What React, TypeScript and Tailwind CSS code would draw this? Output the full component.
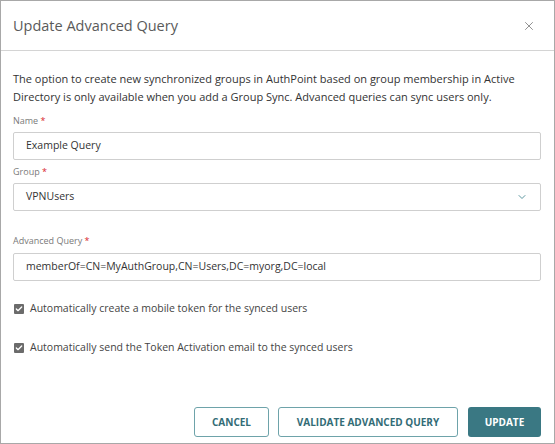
import { ChevronDown, X, Check } from 'lucide-react';

function Label({ text }: { text: string }) {
  return (
    <div className="text-[9px] leading-[12px] text-[#7a7a7a]">
      {text} <span className="text-[#d9262c]">*</span>
    </div>
  );
}

function Checkbox({ label }: { label: string }) {
  return (
    <label className="h-[16px] flex items-center gap-[6px] text-[10.5px] text-[#444]">
      <span className="w-[10px] h-[10px] rounded-[1px] bg-[#6b6b6b] flex items-center justify-center">
        <Check size={8} strokeWidth={4} className="text-white" />
      </span>
      {label}
    </label>
  );
}

export default function App() {
  return (
    <div className="w-[555px] h-[444px] bg-white border border-[#a8a8a8] flex flex-col font-['Open_Sans',sans-serif]">
      <div className="h-[50px] shrink-0 flex items-center justify-between pl-[12px] pr-[18px] border-b border-[#d4d4d4]">
        <h1 className="text-[14.5px] text-[#5a5a5a]">Update Advanced Query</h1>
        <X size={14} strokeWidth={1.3} className="text-[#6f6f6f]" />
      </div>

      <div className="flex-1 flex flex-col pl-[12px] pr-[13px]">
        <p className="mt-[19px] text-[11px] leading-[18px] text-[#333]">
          The option to create new synchronized groups in AuthPoint based on group membership in Active Directory is
          only available when you add a Group Sync. Advanced queries can sync users only.
        </p>

        <div className="mt-[9px]">
          <Label text="Name" />
          <div className="mt-[5px] h-[28px] border border-[#cfcfcf] rounded-[2px] flex items-center px-[12px] text-[10.5px] text-[#333]">
            Example Query
          </div>
        </div>

        <div className="mt-[6px]">
          <Label text="Group" />
          <div className="mt-[5px] h-[28px] border border-[#cfcfcf] rounded-[2px] flex items-center justify-between pl-[12px] pr-[12px] text-[10.5px] text-[#333]">
            VPNUsers
            <ChevronDown size={12} strokeWidth={2} className="text-[#5d97a0]" />
          </div>
        </div>

        <div className="mt-[24px]">
          <Label text="Advanced Query" />
          <div className="mt-[6px] h-[28px] border border-[#cfcfcf] rounded-[2px] flex items-center px-[12px] text-[10.5px] text-[#333]">
            memberOf=CN=MyAuthGroup,CN=Users,DC=myorg,DC=local
          </div>
        </div>

        <div className="mt-[20px] flex flex-col gap-[23px] pl-[1px]">
          <Checkbox label="Automatically create a mobile token for the synced users" />
          <Checkbox label="Automatically send the Token Activation email to the synced users" />
        </div>

        <div className="mt-auto mb-[6px] flex justify-end text-[10px] font-bold">
          <button className="h-[30px] w-[75px] border border-[#6ea3aa] rounded-[3px] text-[#336c76]">CANCEL</button>
          <button className="ml-[9px] h-[30px] w-[180px] border border-[#6ea3aa] rounded-[3px] text-[#336c76]">
            VALIDATE ADVANCED QUERY
          </button>
          <button className="ml-[10px] h-[30px] w-[73px] rounded-[3px] bg-[#3a7883] text-white">UPDATE</button>
        </div>
      </div>
    </div>
  );
}
